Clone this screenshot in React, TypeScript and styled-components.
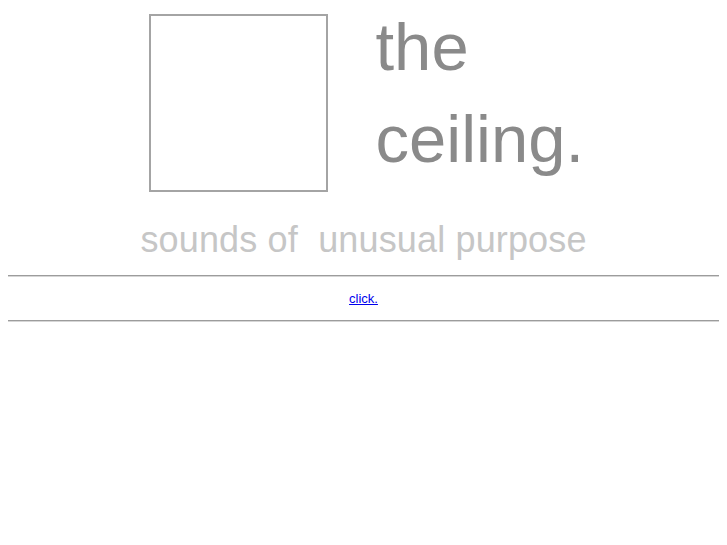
import React from "react";
import styled, { createGlobalStyle } from "styled-components";

const Global = createGlobalStyle`
  html, body { margin: 0; padding: 0; background: #ffffff; }
  body { font-family: "Liberation Sans", Arial, sans-serif; }
`;

const Page = styled.div`
  padding: 0 8px;
`;

const Header = styled.header`
  display: flex;
  flex-direction: column;
  align-items: center;
`;

const Masthead = styled.div`
  width: 446px;
  display: flex;
  align-items: flex-start;
`;

const Square = styled.div`
  box-sizing: border-box;
  width: 179px;
  height: 178px;
  margin: 14px 0 0 8px;
  border: 2px solid #a4a4a4;
  flex: none;
`;

const Title = styled.h1`
  margin: 1px 0 0 48px;
  font-family: "Liberation Sans", Arial, sans-serif;
  font-weight: normal;
  font-size: 67px;
  line-height: 92px;
  color: #8a8a8a;
`;

const TitleLine = styled.span`
  display: block;
  white-space: nowrap;
`;

const Tagline = styled.p`
  margin: 27px 0 0;
  font-family: "Liberation Sans", Arial, sans-serif;
  font-size: 36px;
  line-height: 42px;
  letter-spacing: 0.15px;
  color: #c6c6c6;
  white-space: pre;
`;

const Rule = styled.hr`
  margin: 0;
  height: 0;
  border: none;
  border-top: 1px solid #9c9c9c;
  border-bottom: 1px solid #d6d6d6;
`;

const TopRule = styled(Rule)`
  margin-top: 14px;
`;

const LinkRow = styled.div`
  margin: 14px 0 14px;
  text-align: center;
  font-family: "Liberation Sans", Arial, sans-serif;
  font-size: 13px;
  line-height: 15px;
`;

const EnterLink = styled.a`
  color: #0000ee;
  text-decoration: underline;
`;

export default function App() {
  return (
    <>
      <Global />
      <Page>
        <Header>
          <Masthead>
            <Square />
            <Title>
              <TitleLine>the</TitleLine>
              <TitleLine>ceiling.</TitleLine>
            </Title>
          </Masthead>
          <Tagline>{"sounds of  unusual purpose"}</Tagline>
        </Header>
        <TopRule />
        <LinkRow>
          <EnterLink href="#">click.</EnterLink>
        </LinkRow>
        <Rule />
      </Page>
    </>
  );
}
